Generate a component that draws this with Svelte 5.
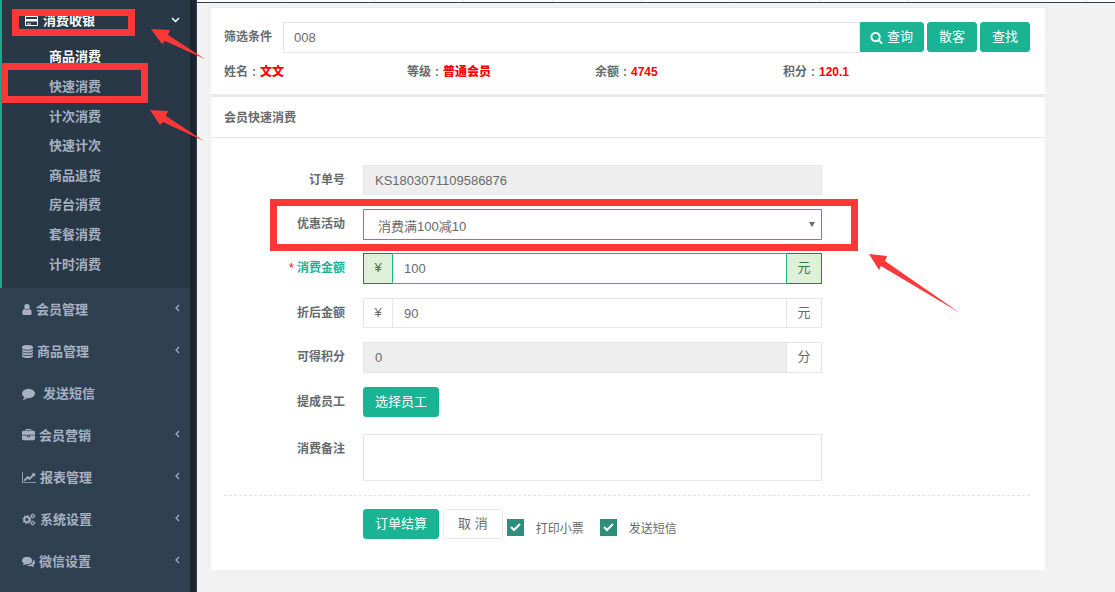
<script lang="ts">
  type MenuItem = { label: string; icon: string; viewBox: string; width: number; leaf?: boolean };

  const cashierLinks = ['商品消费', '快速消费', '计次消费', '快速计次', '商品退货', '房台消费', '套餐消费', '计时消费'];

  const menu: MenuItem[] = [
    {
      label: '会员管理',
      viewBox: '256 0 1280 1792',
      width: 10,
      icon: 'M1536 1399q0 109-62.5 187t-150.5 78h-854q-88 0-150.5-78t-62.5-187q0-85 8.5-160.5t31.5-152 58.5-131 94-89 134.5-34.5q131 128 313 128t313-128q76 0 134.5 34.5t94 89 58.5 131 31.5 152 8.5 160.5zm-256-887q0 159-112.5 271.5t-271.5 112.5-271.5-112.5-112.5-271.5 112.5-271.5 271.5-112.5 271.5 112.5 112.5 271.5z'
    },
    {
      label: '商品管理',
      viewBox: '128 0 1536 1792',
      width: 11,
      icon: 'M896 768q237 0 443-43t325-127v170q0 69-103 128t-280 93.5-385 34.5-385-34.5-280-93.5-103-128v-170q119 84 325 127t443 43zm0 768q237 0 443-43t325-127v170q0 69-103 128t-280 93.5-385 34.5-385-34.5-280-93.5-103-128v-170q119 84 325 127t443 43zm0-384q237 0 443-43t325-127v170q0 69-103 128t-280 93.5-385 34.5-385-34.5-280-93.5-103-128v-170q119 84 325 127t443 43zm0-1152q208 0 385 34.5t280 93.5 103 128v128q0 69-103 128t-280 93.5-385 34.5-385-34.5-280-93.5-103-128v-128q0-69 103-128t280-93.5 385-34.5z'
    },
    {
      label: '发送短信',
      viewBox: '0 0 1792 1792',
      width: 13,
      leaf: true,
      icon: 'M1792 896q0 174-120 321.5t-326 233-450 85.5q-70 0-145-8-198 175-460 242-49 14-114 22-17 2-30.5-9t-17.5-29v-1q-3-4-.5-12t2-10 4.5-9.5l6-9 7-8.5 8-9q7-8 31-34.5t34.5-38 31-39.5 32.5-51 27-59 26-76q-157-89-247.5-220t-90.5-281q0-130 71-248.5t191-204.5 286-136.5 348-50.5q244 0 450 85.5t326 233 120 321.5z'
    },
    {
      label: '会员营销',
      viewBox: '0 0 1792 1792',
      width: 13,
      icon: 'M640 256h512v-128h-512v128zm1152 640v480q0 66-47 113t-113 47h-1472q-66 0-113-47t-47-113v-480h672v160q0 26 19 45t45 19h320q26 0 45-19t19-45v-160h672zm-768 0v128h-256v-128h256zm768-480v384h-1792v-384q0-66 47-113t113-47h352v-160q0-40 28-68t68-28h576q40 0 68 28t28 68v160h352q66 0 113 47t47 113z'
    },
    {
      label: '报表管理',
      viewBox: '0 0 2048 1792',
      width: 14,
      icon: 'M2048 1536v128h-2048v-1536h128v1408h1920zm-128-1248v435q0 21-19.5 29.5t-35.5-7.5l-121-121-633 633q-10 10-23 10t-23-10l-233-233-416 416-192-192 585-585q10-10 23-10t23 10l233 233 464-464-121-121q-16-16-7.5-35.5t29.5-19.5h435q14 0 23 9t9 23z'
    },
    { label: '系统设置', viewBox: '0 0 14 14', width: 14, icon: '' },
    {
      label: '微信设置',
      viewBox: '0 0 1792 1792',
      width: 13,
      icon: 'M1408 768q0 139-94 257t-256.5 186.5-353.5 68.5q-86 0-176-16-124 88-278 128-36 9-86 16h-3q-11 0-20.5-8t-11.5-21q-1-3-1-6.5t.5-6.5 2-6l2.5-5 3.5-5.5 4-5 4.5-5 4-4.5q5-6 23-25t26-29.5 22.5-29 25-38.5 20.5-44q-124-72-195-177t-71-224q0-139 94-257t256.5-186.5 353.5-68.5 353.5 68.5 256.5 186.5 94 257zm384 256q0 120-71 224.5t-195 176.5q10 24 20.5 44t25 38.5 22.5 29 26 29.5 23 25q1 1 4 4.5t4.5 5 4 5 3.5 5.5l2.5 5 2 6 .5 6.5-1 6.5q-3 14-13 22t-22 7q-50-7-86-16-154-40-278-128-90 16-176 16-271 0-472-132 58 4 88 4 161 0 309-45t264-129q125-92 192-212t67-257q0-77-23-152 129 71 204 178t75 230z'
    }
  ];

  const member = [
    { label: '姓名', value: '文文' },
    { label: '等级', value: '普通会员' },
    { label: '余额', value: '4745' },
    { label: '积分', value: '120.1' }
  ];

  let keyword = $state('008');
  let amount = $state('100');
  let discounted = $state('90');
  let remark = $state('');
  let printTicket = $state(true);
  let sendSms = $state(true);
</script>

<div class="page">
  <nav class="sidebar">
    <div class="group">
      <a class="item open" href="#cashier">
        <svg width="13" height="12" viewBox="0 0 13 12">
          <path d="M.5 1.5h12v9H.5z" fill="none" stroke="currentColor" />
          <path d="M0 4h13v2.5H0zM2 8.5h4v1H2z" fill="currentColor" />
        </svg>
        <span>消费收银</span>
        <svg class="arrow" width="9" height="6" viewBox="0 0 9 6">
          <path d="M1 1l3.500 3.500L8 1" fill="none" stroke="currentColor" stroke-width="1.500" />
        </svg>
      </a>
      <ul class="submenu">
        {#each cashierLinks as link, i}
          <li><a href="#cashier-{i}" class:current={i === 0}>{link}</a></li>
        {/each}
      </ul>
    </div>
    {#each menu as item, i}
      <a class="item" class:leaf={item.leaf} href="#menu-{i}">
        <svg width={item.width} height="13" viewBox={item.viewBox}>
          {#if item.icon}
            <path d={item.icon} fill="currentColor" />
          {:else}
            <g fill="none" stroke="currentColor">
              <circle cx="4.700" cy="7" r="2.800" stroke-width="2" />
              <circle cx="4.700" cy="7" r="4.200" stroke-width="1.200" stroke-dasharray="1.650 1.650" />
              <circle cx="11" cy="3.300" r="1.500" stroke-width="1.200" />
              <circle cx="11" cy="3.300" r="2.400" stroke-width=".8" stroke-dasharray="1.250 1.250" />
              <circle cx="11" cy="10.700" r="1.500" stroke-width="1.200" />
              <circle cx="11" cy="10.700" r="2.400" stroke-width=".8" stroke-dasharray="1.250 1.250" />
            </g>
          {/if}
        </svg>
        <span>{item.label}</span>
        {#if !item.leaf}
          <svg class="arrow" width="5" height="8" viewBox="0 0 5 8">
            <path d="M4 1L1 4l3 3" fill="none" stroke="currentColor" stroke-width="1.200" />
          </svg>
        {/if}
      </a>
    {/each}
  </nav>

  <main>
    <div class="topbar"></div>
    <section class="panel">
      <div class="filter">
        <div class="search">
          <label for="keyword">筛选条件</label>
          <input id="keyword" class="control" type="text" bind:value={keyword} />
          <button type="button" class="btn primary joined">
            <svg width="13" height="13" viewBox="0 0 1792 1792">
              <path
                fill="currentColor"
                d="M1216 832q0-185-131.5-316.5t-316.5-131.5-316.5 131.5-131.5 316.5 131.5 316.5 316.5 131.5 316.5-131.5 131.5-316.5zm512 832q0 52-38 90t-90 38q-54 0-90-38l-343-342q-179 124-399 124-143 0-273.5-55.5t-225-150-150-225-55.5-273.5 55.5-273.5 150-225 225-150 273.5-55.5 273.5 55.5 225 150 150 225 55.5 273.5q0 220-124 399l343 343q37 37 37 90z"
              />
            </svg>
            查询
          </button>
          <button type="button" class="btn primary">散客</button>
          <button type="button" class="btn primary">查找</button>
        </div>
        <div class="member">
          {#each member as field}
            <span>{field.label}<span class="colon">:</span><b>{field.value}</b></span>
          {/each}
        </div>
      </div>

      <h5>会员快速消费</h5>

      <form>
        <div class="row">
          <label for="order">订单号</label>
          <input id="order" class="control" type="text" value="KS1803071109586876" readonly />
        </div>
        <div class="row">
          <label for="promo">优惠活动</label>
          <div class="select">
            <select id="promo" class="control">
              <option>消费满100减10</option>
            </select>
            <svg width="6" height="5" viewBox="0 0 6 5"><path d="M0 0h6L3 5z" fill="currentColor" /></svg>
          </div>
        </div>
        <div class="row valid">
          <label for="amount"><i>*</i> 消费金额</label>
          <div class="addons">
            <span class="unit">¥</span>
            <input id="amount" class="control" type="text" bind:value={amount} />
            <span class="unit end">元</span>
          </div>
        </div>
        <div class="row">
          <label for="discounted">折后金额</label>
          <div class="addons">
            <span class="unit">¥</span>
            <input id="discounted" class="control" type="text" bind:value={discounted} />
            <span class="unit end">元</span>
          </div>
        </div>
        <div class="row">
          <label for="points">可得积分</label>
          <div class="addons">
            <input id="points" class="control" type="text" value="0" readonly />
            <span class="unit end">分</span>
          </div>
        </div>
        <div class="row">
          <label for="staff">提成员工</label>
          <div><button id="staff" type="button" class="btn primary">选择员工</button></div>
        </div>
        <div class="row remark">
          <label for="remark">消费备注</label>
          <textarea id="remark" class="control" bind:value={remark}></textarea>
        </div>
        <hr />
        <div class="actions">
          <button type="button" class="btn primary">订单结算</button>
          <button type="button" class="btn plain">取 消</button>
          <label><input type="checkbox" bind:checked={printTicket} />打印小票</label>
          <label><input type="checkbox" bind:checked={sendSms} />发送短信</label>
        </div>
      </form>
    </section>
  </main>

  <!-- tutorial marks over the page -->
  <svg class="marks" width="1000" height="400" aria-hidden="true">
    <g fill="none" stroke="#fc3737" stroke-width="7">
      <rect x="15.500" y="12.500" width="116" height="20" />
      <rect x="4.500" y="66.500" width="140" height="33" />
      <rect x="273.500" y="202.500" width="581" height="45" />
    </g>
    <g fill="#fc3737">
      <path d="M151 29l19 1-2 5 37 24-40-18-3 3z" />
      <path d="M150 110l18 1-2 5 38 25-41-19-3 3z" />
      <path d="M869 254l18 2-2 5 75 52-79-47-2 4z" />
    </g>
  </svg>
</div>

<style>
  :global(body) {
    margin: 0;
    background: #f2f2f2;
  }

  .page {
    position: relative;
    display: flex;
    min-height: 100vh;
    overflow: hidden;
    color: #676a6c;
    font-family: 'Liberation Sans', 'Noto Sans CJK SC', sans-serif;
    font-size: 13px;
  }

  .page * {
    box-sizing: border-box;
  }

  .sidebar {
    flex: none;
    width: 197px;
    padding-right: 7px;
    background: linear-gradient(to left, #2f4050 1px, #1d2630 1px 7px, #2f4050 7px);
    font-weight: 700;
  }

  .group {
    border-left: 2px solid #19aa8d;
    background: #293846;
    padding-bottom: 10px;
  }

  .item {
    display: flex;
    align-items: center;
    gap: 4px;
    height: 42px;
    padding: 0 10px 2px 22px;
    color: #a7b1c2;
    text-decoration: none;
  }

  .item svg:first-child {
    margin-top: 2px;
  }

  .item.open {
    gap: 5px;
    height: 41px;
    color: #fff;
    padding-left: 23px;
  }

  .item.leaf {
    gap: 8px;
  }

  .arrow {
    margin-left: auto;
  }

  .submenu {
    display: grid;
    min-height: 237px;
    margin: 0;
    padding: 0;
    list-style: none;
  }

  .submenu a {
    display: flex;
    align-items: center;
    height: 100%;
    padding-left: 47px;
    color: #a7b1c2;
    text-decoration: none;
  }

  .submenu a.current {
    color: #fff;
  }

  main {
    flex: 1;
    min-width: 0;
  }

  /* bottom edge of the tab strip */
  .topbar {
    height: 3px;
    background: repeating-linear-gradient(to right, #fafafa 0 88px, #e4e4e4 88px 89px);
    border-bottom: 1px solid #2f4050;
  }

  .panel {
    margin: 4px 70px 22px 14px;
    border-top: 1px solid #e7eaec;
    background: #fff;
  }

  .filter {
    height: 86px;
    padding: 14px 15px 0 13px;
  }

  .search {
    display: flex;
    gap: 3px;
  }

  label {
    font-size: 12px;
    font-weight: 700;
    line-height: 30px;
  }

  .search label {
    flex: none;
    width: 56px;
  }

  .control {
    display: block;
    width: 100%;
    height: 31px;
    min-width: 0;
    margin: 0;
    padding: 0 10px;
    border: 1px solid #e5e6e7;
    border-radius: 0;
    outline: none;
    background: #fff;
    color: inherit;
    font: inherit;
  }

  .control:read-only:not(select) {
    background: #eee;
  }

  .row .control {
    padding: 0 11px;
  }

  .btn {
    flex: none;
    height: 30px;
    padding: 0 11px;
    border: 1px solid #1ab394;
    border-radius: 3px;
    font: inherit;
    line-height: 28px;
    white-space: nowrap;
  }

  .primary {
    background: #1ab394;
    color: #fff;
  }

  .plain {
    padding: 0 14px;
    border-color: #e7eaec;
    background: #fff;
    color: inherit;
  }

  .joined {
    display: flex;
    align-items: center;
    gap: 4px;
    margin-left: -3px;
    padding: 0 10px 0 9px;
    border-radius: 0 3px 3px 0;
  }

  .member {
    display: grid;
    grid-template-columns: 183fr 188fr 188fr 247fr;
    margin-top: 10px;
    font-size: 12px;
    font-weight: 700;
    line-height: 18px;
  }

  .member b {
    color: #f00;
  }

  .colon {
    display: inline-block;
    width: 12px;
    text-align: center;
  }

  h5 {
    margin: 0;
    padding: 3px 13px 0;
    border-top: 3px solid #e7eaec;
    border-bottom: 1px solid #e7eaec;
    font-size: 12px;
    line-height: 37px;
  }

  form {
    display: grid;
    gap: 14px;
    padding: 27px 15px 31px 13px;
  }

  .row {
    display: grid;
    grid-template-columns: 121px minmax(0, 459px);
    column-gap: 18px;
  }

  .row label {
    text-align: right;
  }

  .row label i {
    color: #f00;
    font-style: normal;
    font-weight: 400;
  }

  #order {
    height: 30px;
  }

  .select {
    position: relative;
    height: 30px;
  }

  .select .control {
    padding: 3px 14px 0;
    border-color: #1ab394;
    appearance: none;
  }

  .select svg {
    position: absolute;
    right: 7px;
    top: 13px;
  }

  .addons {
    display: flex;
  }

  .addons .control {
    height: 30px;
  }

  .unit {
    flex: none;
    width: 30px;
    margin-right: -1px;
    border: 1px solid #e5e6e7;
    line-height: 28px;
    text-align: center;
  }

  .unit.end {
    width: 36px;
    margin: 0 0 0 -1px;
  }

  .valid label {
    color: #1ab394;
  }

  .valid .control {
    position: relative;
    height: 31px;
    border-color: #1ab394;
  }

  .valid .unit {
    border-color: #3c763d;
    background: #dff0d8;
    color: #3c763d;
  }

  #points {
    height: 31px;
  }

  .remark {
    padding-top: 3px;
  }

  .remark .control {
    height: 47px;
    resize: none;
  }

  hr {
    width: 100%;
    margin: 0 0 -1px;
    border: 0;
    border-top: 1px dashed #e0e3e5;
  }

  .actions {
    display: flex;
    align-items: flex-end;
    gap: 4px;
    padding-left: 139px;
  }

  .actions label {
    display: flex;
    gap: 12px;
    margin-right: 12px;
    font-weight: 400;
    line-height: 20px;
  }

  .actions input {
    width: 17px;
    height: 17px;
    margin: 0;
    appearance: none;
  }

  .actions input:checked {
    background:
      url("data:image/svg+xml,%3Csvg xmlns='http://www.w3.org/2000/svg' viewBox='0 0 17 17'%3E%3Cpath d='M4 8l3 3 6-6' fill='none' stroke='white' stroke-width='2'/%3E%3C/svg%3E"),
      #2d8e7b;
  }

  .marks {
    position: absolute;
    top: 0;
    left: 0;
    pointer-events: none;
  }
</style>
